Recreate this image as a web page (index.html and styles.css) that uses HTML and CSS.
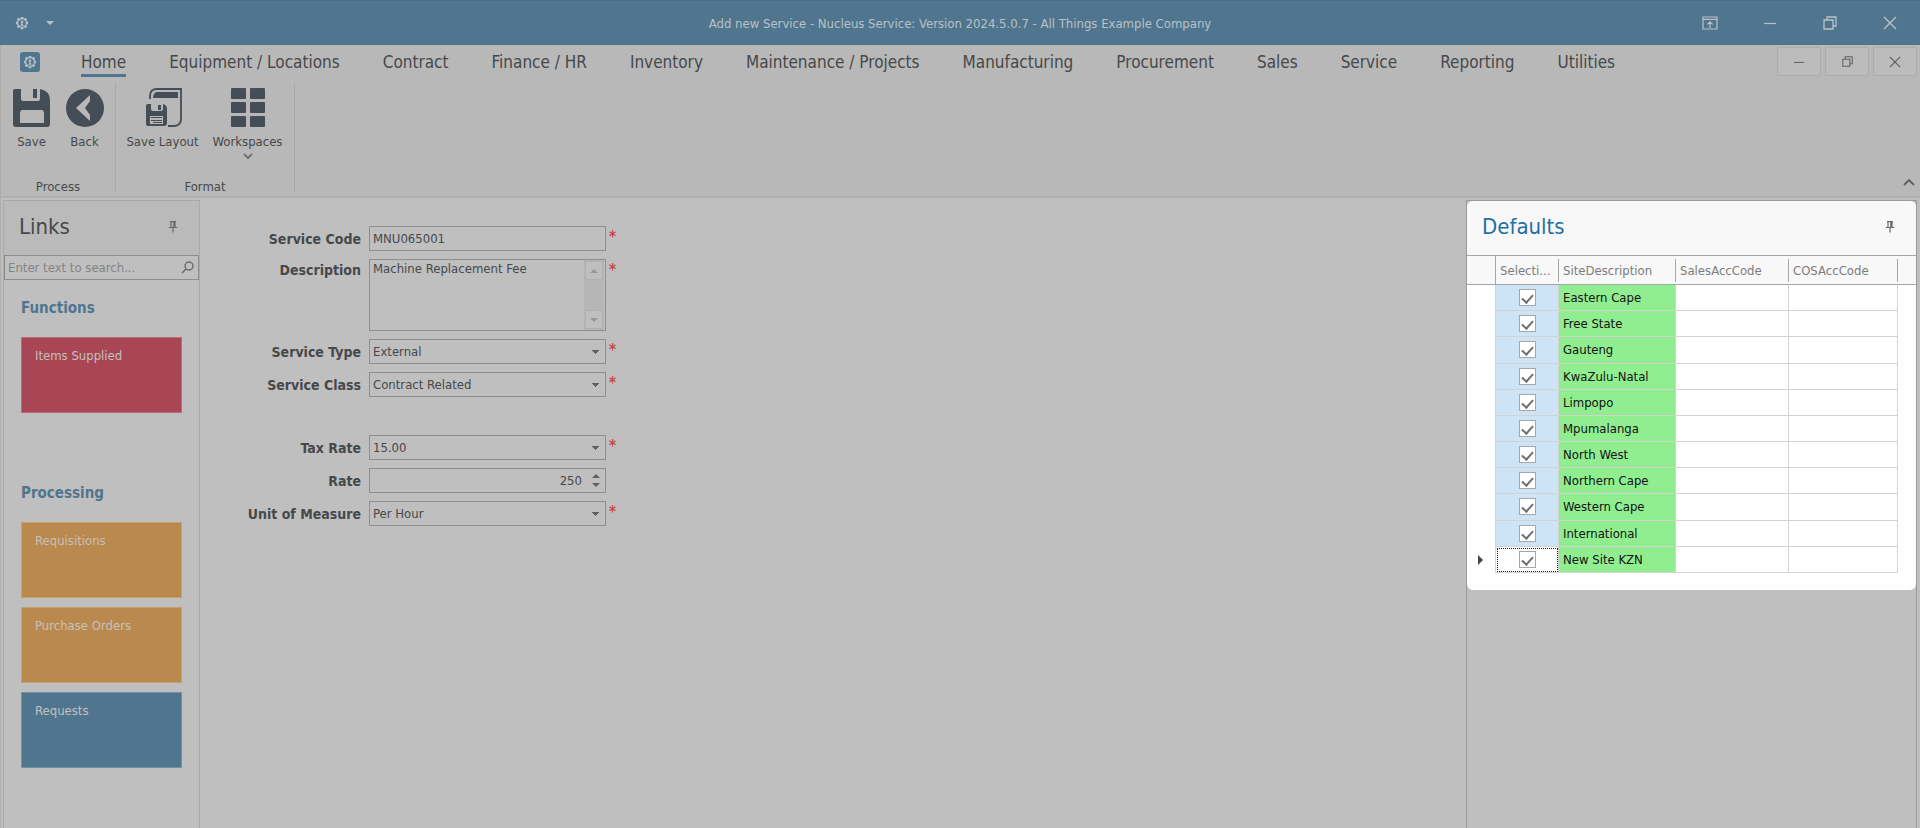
FILE: index.html
```html
<!DOCTYPE html>
<html lang="en">
<head>
    <meta charset="UTF-8">
    <meta name="viewport" content="width=device-width, initial-scale=1.0">
    <title>Add new Service - Nucleus Service</title>
    <link rel="stylesheet" href="styles.css">
</head>
<body>

    <!-- Shared icons -->
    <svg class="sprite" width="0" height="0" aria-hidden="true">
        <symbol id="gear" viewBox="0 0 16 16">
            <path d="M8 1v2M8 13v2M1 8h2M13 8h2M3 3l2 2M11 11l2 2M13 3l-2 2M5 11l-2 2" fill="none" stroke="currentColor" stroke-width="3"/>
            <circle cx="8" cy="8" r="5" fill="none" stroke="currentColor" stroke-width="1.4"/>
            <circle cx="8" cy="6.6" r="1.5" fill="currentColor"/>
            <path d="M6 11l2-4 2 4z" fill="currentColor"/>
        </symbol>
        <symbol id="pin" viewBox="0 0 10 12">
            <path d="M2 .7h6M3 1v5M7 1v5M5.8 1v5M.7 6.5h8.6M5 7v4.5" fill="none" stroke="currentColor" stroke-width="1.2"/>
        </symbol>
        <symbol id="close" viewBox="0 0 14 14">
            <path d="M1 1l12 12M13 1L1 13" fill="none" stroke="currentColor" stroke-width="1.4"/>
        </symbol>
        <symbol id="restore" viewBox="0 0 14 14">
            <path d="M1 4h9v9H1zM4 4V1h9v9h-3" fill="none" stroke="currentColor" stroke-width="1.3"/>
        </symbol>
        <symbol id="minimise" viewBox="0 0 14 14">
            <path d="M1 7.5h12" fill="none" stroke="currentColor" stroke-width="1.2"/>
        </symbol>
    </svg>

    <header class="title-bar">
        <div class="quick-access">
            <svg width="14" height="14"><use href="#gear"/></svg>
            <button class="quick-menu" aria-label="Customise"></button>
        </div>
        <h1 class="window-title">Add new Service - Nucleus Service: Version 2024.5.0.7 - All Things Example Company</h1>
        <div class="window-buttons">
            <button aria-label="Ribbon display">
                <svg width="16" height="14" viewBox="0 0 16 14" fill="none" stroke="currentColor" stroke-width="1.2"><path d="M1 1h14v12H1zM1 3.4h14M8 12V6M5.3 8.4 8 5.8l2.7 2.6"/></svg>
            </button>
            <button aria-label="Minimise"><svg width="14" height="14"><use href="#minimise"/></svg></button>
            <button aria-label="Restore"><svg width="14" height="14"><use href="#restore"/></svg></button>
            <button aria-label="Close"><svg width="14" height="14"><use href="#close"/></svg></button>
        </div>
    </header>

    <div class="ribbon">
        <div class="tab-row">
            <button class="app-button" aria-label="Application"><svg width="14" height="14"><use href="#gear"/></svg></button>
            <nav class="tabs">
                <a href="#" class="active">Home</a>
                <a href="#">Equipment / Locations</a>
                <a href="#">Contract</a>
                <a href="#">Finance / HR</a>
                <a href="#">Inventory</a>
                <a href="#">Maintenance / Projects</a>
                <a href="#">Manufacturing</a>
                <a href="#">Procurement</a>
                <a href="#">Sales</a>
                <a href="#">Service</a>
                <a href="#">Reporting</a>
                <a href="#">Utilities</a>
            </nav>
            <div class="child-buttons">
                <button aria-label="Minimise form"><svg width="12" height="12"><use href="#minimise"/></svg></button>
                <button aria-label="Restore form"><svg width="11" height="11"><use href="#restore"/></svg></button>
                <button aria-label="Close form"><svg width="12" height="12"><use href="#close"/></svg></button>
            </div>
        </div>

        <div class="groups">
            <section class="group">
                <div class="group-items">
                    <button class="tool">
                        <svg width="40" height="40" viewBox="0 0 40 40" fill="currentColor">
                            <path fill-rule="evenodd" d="M3 1h6v10q0 2 2 2h15q2 0 2-2V1q10 2 10 11v24q0 3-3 3H4q-3 0-3-3V3q0-2 2-2zM11 22q-3 0-3 3v10h24V25q0-3-3-3z"/>
                            <path d="M21 1h4v9h-4z"/>
                        </svg>
                        Save
                    </button>
                    <button class="tool">
                        <svg width="40" height="40" viewBox="0 0 40 40">
                            <circle cx="20" cy="20" r="19" fill="currentColor"/>
                            <path class="cutout" d="M25 7v6l-5 7 5 7v6L11 20z"/>
                        </svg>
                        Back
                    </button>
                </div>
                <h2>Process</h2>
            </section>
            <section class="group">
                <div class="group-items">
                    <button class="tool wide">
                        <svg width="40" height="40" viewBox="0 0 40 40" fill="currentColor">
                            <path d="M7 11V8q0-7 7-7h24v31q-1 6-7 6h-6" fill="none" stroke="currentColor" stroke-width="1.8"/>
                            <path d="M13 4h22v6H10q0-4 3-6z"/>
                            <path fill-rule="evenodd" d="M5 16h3v5q0 2 2 2h8q2 0 2-2v-5q4 1 4 5v14q0 3-3 3H5q-2 0-2-2V18q0-2 2-2zM7 28v8h13v-8z"/>
                            <path d="M15 17h3v5h-3zM8 29h11v1H8zM8 32h11v1H8zM10 34h9v1h-9z"/>
                        </svg>
                        Save Layout
                    </button>
                    <button class="tool wide">
                        <svg width="40" height="40" viewBox="0 0 40 40" fill="currentColor">
                            <rect x="3" y="0" width="15" height="11" rx="1"/><rect x="22" y="0" width="15" height="11" rx="1"/>
                            <rect x="3" y="14" width="15" height="11" rx="1"/><rect x="22" y="14" width="15" height="11" rx="1"/>
                            <rect x="3" y="28" width="15" height="11" rx="1"/><rect x="22" y="28" width="15" height="11" rx="1"/>
                        </svg>
                        Workspaces
                        <svg class="chevron" width="10" height="6" viewBox="0 0 10 6" fill="none" stroke="currentColor" stroke-width="1.6"><path d="M1 1l4 4 4-4"/></svg>
                    </button>
                </div>
                <h2>Format</h2>
            </section>
            <button class="collapse" aria-label="Collapse ribbon">
                <svg width="12" height="8" viewBox="0 0 12 8" fill="none" stroke="currentColor" stroke-width="1.8"><path d="M1 7l5-5 5 5"/></svg>
            </button>
        </div>
    </div>

    <div class="workspace">
        <aside class="links">
            <header class="panel-header">
                <h2>Links</h2>
                <button aria-label="Pin links"><svg width="10" height="12"><use href="#pin"/></svg></button>
            </header>
            <div class="search">
                <input type="search" placeholder="Enter text to search..." aria-label="Search links">
                <svg width="13" height="13" viewBox="0 0 13 13" fill="none" stroke="currentColor" stroke-width="1.4"><circle cx="8" cy="5" r="4"/><path d="M5 8L1 12"/></svg>
            </div>
            <section class="tiles">
                <h3>Functions</h3>
                <button class="tile red">Items Supplied</button>
            </section>
            <section class="tiles">
                <h3>Processing</h3>
                <button class="tile orange">Requisitions</button>
                <button class="tile orange">Purchase Orders</button>
                <button class="tile blue">Requests</button>
            </section>
        </aside>

        <main class="content">
            <form class="service-form">
                <div class="row">
                    <label for="code">Service Code</label>
                    <input class="field" id="code" type="text" value="MNU065001">
                    <span class="required">*</span>
                </div>
                <div class="row top">
                    <label for="description">Description</label>
                    <div class="field memo">
                        <textarea id="description">Machine Replacement Fee</textarea>
                        <div class="scrollbar">
                            <span class="scroll-button"><i class="arrow up"></i></span>
                            <span class="scroll-button"><i class="arrow"></i></span>
                        </div>
                    </div>
                    <span class="required">*</span>
                </div>
                <div class="row">
                    <label for="type">Service Type</label>
                    <select class="field" id="type"><option>External</option></select>
                    <span class="required">*</span>
                </div>
                <div class="row">
                    <label for="class">Service Class</label>
                    <select class="field" id="class"><option>Contract Related</option></select>
                    <span class="required">*</span>
                </div>
                <div class="row spaced">
                    <label for="tax">Tax Rate</label>
                    <select class="field" id="tax"><option>15.00</option></select>
                    <span class="required">*</span>
                </div>
                <div class="row">
                    <label for="rate">Rate</label>
                    <div class="field spin">
                        <input id="rate" type="number" value="250">
                        <div class="spin-buttons"><i class="arrow up"></i><i class="arrow"></i></div>
                    </div>
                </div>
                <div class="row">
                    <label for="unit">Unit of Measure</label>
                    <select class="field" id="unit"><option>Per Hour</option></select>
                    <span class="required">*</span>
                </div>
            </form>
        </main>

        <aside class="defaults">
            <div class="defaults-card">
                <header class="panel-header">
                    <h2>Defaults</h2>
                    <button aria-label="Pin defaults"><svg width="10" height="12"><use href="#pin"/></svg></button>
                </header>
                <table class="grid">
                    <colgroup>
                        <col class="col-marker"><col class="col-select"><col class="col-site"><col class="col-sales"><col class="col-cos"><col>
                    </colgroup>
                    <thead>
                        <tr><th></th><th><span>Selecti...</span></th><th><span>SiteDescription</span></th><th><span>SalesAccCode</span></th><th><span>COSAccCode</span></th><th></th></tr>
                    </thead>
                    <tbody>
                        <tr><td></td><td class="select"><input type="checkbox" aria-label="Eastern Cape" checked></td><td class="site">Eastern Cape</td><td></td><td></td><td></td></tr>
                        <tr><td></td><td class="select"><input type="checkbox" aria-label="Free State" checked></td><td class="site">Free State</td><td></td><td></td><td></td></tr>
                        <tr><td></td><td class="select"><input type="checkbox" aria-label="Gauteng" checked></td><td class="site">Gauteng</td><td></td><td></td><td></td></tr>
                        <tr><td></td><td class="select"><input type="checkbox" aria-label="KwaZulu-Natal" checked></td><td class="site">KwaZulu-Natal</td><td></td><td></td><td></td></tr>
                        <tr><td></td><td class="select"><input type="checkbox" aria-label="Limpopo" checked></td><td class="site">Limpopo</td><td></td><td></td><td></td></tr>
                        <tr><td></td><td class="select"><input type="checkbox" aria-label="Mpumalanga" checked></td><td class="site">Mpumalanga</td><td></td><td></td><td></td></tr>
                        <tr><td></td><td class="select"><input type="checkbox" aria-label="North West" checked></td><td class="site">North West</td><td></td><td></td><td></td></tr>
                        <tr><td></td><td class="select"><input type="checkbox" aria-label="Northern Cape" checked></td><td class="site">Northern Cape</td><td></td><td></td><td></td></tr>
                        <tr><td></td><td class="select"><input type="checkbox" aria-label="Western Cape" checked></td><td class="site">Western Cape</td><td></td><td></td><td></td></tr>
                        <tr><td></td><td class="select"><input type="checkbox" aria-label="International" checked></td><td class="site">International</td><td></td><td></td><td></td></tr>
                        <tr class="current"><td><i class="marker"></i></td><td class="select"><input type="checkbox" aria-label="New Site KZN" checked></td><td class="site">New Site KZN</td><td></td><td></td><td></td></tr>
                    </tbody>
                </table>
            </div>
        </aside>
    </div>

</body>
</html>
```
FILE: styles.css
```css
* {
    box-sizing: border-box;
}

body {
    margin: 0;
    min-height: 100vh;
    display: flex;
    flex-direction: column;
    background-color: #bfbfbf;
    color: #46484a;
    font-family: "DejaVu Sans Condensed", "Noto Sans", sans-serif;
    font-size: 13px;
}

h1, h2, h3 {
    margin: 0;
    font-weight: normal;
}

button, input, select, textarea {
    font: inherit;
    color: inherit;
}

button {
    border: none;
    padding: 0;
    background: none;
    cursor: pointer;
}

svg {
    display: block;
}

.sprite {
    position: absolute;
}

/* Title bar */
.title-bar {
    display: grid;
    grid-template-columns: 1fr auto 1fr;
    align-items: center;
    height: 45px;
    background-color: #50758f;
    border-top: 1px solid #4c6d84;
    color: #b9c1c7;
}

.quick-access {
    display: flex;
    align-items: center;
    gap: 17px;
    padding-left: 15px;
}

.quick-menu {
    border: 4px solid transparent;
    border-top-color: #b9c1c7;
    border-bottom: none;
}

.window-title {
    font-size: 13px;
}

.window-buttons {
    display: flex;
    justify-content: flex-end;
}

.window-buttons button {
    width: 60px;
    height: 44px;
    display: grid;
    place-items: center;
}

/* Ribbon */
.ribbon {
    background-color: #b8b8b8;
    border-bottom: 2px solid #b0b0b0;
    border-left: 1px solid #adadad;
}

.tab-row {
    display: flex;
    height: 38px;
    padding-right: 3px;
}

.app-button {
    width: 20px;
    height: 20px;
    margin: 7px 41px 0 19px;
    display: grid;
    place-items: center;
    border-radius: 3px;
    background-color: #50758f;
    color: #b9c1c7;
}

.tabs {
    flex: 1;
    display: flex;
    gap: 43px;
}

.tabs a {
    height: 32px;
    line-height: 35px;
    font-size: 17px;
    color: #46484a;
    text-decoration: none;
    white-space: nowrap;
}

.tabs .active {
    border-bottom: 3px solid #50758f;
}

.child-buttons {
    display: flex;
    gap: 4px;
    padding-top: 2px;
}

.child-buttons button {
    width: 44px;
    height: 29px;
    display: grid;
    place-items: center;
    border: 1px solid #adadad;
    border-radius: 2px;
    background-color: #bcbcbc;
    color: #606060;
}

.groups {
    display: flex;
    height: 113px;
    padding-bottom: 4px;
}

.group {
    display: flex;
    flex-direction: column;
    justify-content: space-between;
    padding: 5px 4px 0;
    border-right: 1px solid #a9a9a9;
}

.group-items {
    display: flex;
}

.group h2 {
    font-size: 13px;
    line-height: 11px;
    text-align: center;
}

.tool {
    width: 53px;
    display: flex;
    flex-direction: column;
    align-items: center;
    line-height: 27px;
}

.tool.wide {
    width: 85px;
}

.tool svg {
    color: #454d57;
}

.tool .chevron {
    margin-top: -2px;
    color: #606060;
}

.tool .cutout {
    fill: #b8b8b8;
}

.collapse {
    margin: auto 5px 6px auto;
    color: #606060;
}

/* Work area */
.workspace {
    flex: 1;
    display: flex;
    padding: 2px 3px 0 2px;
    border-left: 1px solid #adadad;
}

.panel-header {
    display: flex;
    align-items: center;
    justify-content: space-between;
    height: 54px;
    padding: 0 21px 3px 15px;
    background-color: #bababa;
}

.panel-header h2 {
    font-size: 22px;
}

.panel-header button {
    color: #6a6a6a;
}

.links {
    width: 197px;
    border: 1px solid #a9a9a9;
    border-bottom: none;
}

.search {
    display: flex;
    align-items: center;
    height: 25px;
    padding: 0 4px 0 3px;
    border: 1px solid #8e8e8e;
    color: #6a6a6a;
}

.search input {
    flex: 1;
    min-width: 0;
    padding: 0;
    border: none;
    outline: none;
    background: none;
    appearance: none;
}

.search input::placeholder {
    color: #848484;
    opacity: 1;
}

.tiles {
    display: flex;
    flex-direction: column;
    gap: 9px;
    padding: 18px 17px 52px;
}

.tiles h3 {
    margin-bottom: 10px;
    line-height: 20px;
    font-size: 15px;
    font-weight: bold;
    color: #50758f;
}

.tile {
    display: flex;
    height: 76px;
    padding: 10px 13px;
    border: 1px solid rgba(255, 255, 255, 0.2);
    color: #c6c0bd;
}

.red {
    background-color: #a84655;
}

.orange {
    background-color: #ba894e;
}

.blue {
    background-color: #50758f;
}

/* Service form */
.content {
    flex: 1;
}

.service-form {
    display: flex;
    flex-direction: column;
    gap: 8px;
    padding: 26px 0 0 20px;
}

.row {
    display: grid;
    grid-template-columns: 149px 237px auto;
    justify-content: start;
    align-items: center;
}

.row.top {
    align-items: start;
}

.row.spaced {
    margin-top: 30px;
}

.row label {
    padding-right: 8px;
    line-height: 22px;
    font-size: 14px;
    font-weight: bold;
    text-align: right;
}

.field {
    width: 100%;
    height: 25px;
    padding: 0 3px;
    border: 1px solid #8e8e8e;
    border-radius: 0;
    background-color: transparent;
    outline: none;
}

select.field {
    appearance: none;
    background-image: linear-gradient(to bottom right, #606060 50%, transparent 50%), linear-gradient(to bottom left, #606060 50%, transparent 50%);
    background-size: 4px 4px;
    background-repeat: no-repeat;
    background-position: right 5px center, right 9px center;
}

.memo {
    display: flex;
    height: 72px;
    padding-right: 1px;
}

.memo textarea {
    flex: 1;
    min-width: 0;
    padding: 1px 0;
    border: none;
    outline: none;
    resize: none;
    overflow: hidden;
    background: none;
}

.scrollbar {
    display: flex;
    flex-direction: column;
    justify-content: space-between;
    padding: 1px;
    background-color: #b6b6b6;
}

.scroll-button {
    display: grid;
    place-items: center;
    width: 18px;
    height: 19px;
    border: 1px solid #b0b0b0;
    background-color: #bfbfbf;
}

.arrow {
    border: 4px solid transparent;
    border-top-color: #606060;
    border-bottom: none;
}

.arrow.up {
    border-top: none;
    border-bottom: 4px solid #606060;
}

.scroll-button .arrow {
    opacity: 0.4;
}

.spin {
    display: flex;
    padding-right: 5px;
}

.spin input {
    flex: 1;
    min-width: 0;
    padding: 0 10px 0 0;
    border: none;
    outline: none;
    background: none;
    text-align: right;
    appearance: textfield;
}

.spin input::-webkit-inner-spin-button {
    appearance: none;
    margin: 0;
}

.spin-buttons {
    display: flex;
    flex-direction: column;
    justify-content: space-between;
    padding: 5px 0;
}

.required {
    align-self: start;
    padding-left: 3px;
    line-height: 22px;
    font-size: 15px;
    font-weight: bold;
    color: #c8484e;
}

/* Defaults panel */
.defaults {
    width: 451px;
    border: 1px solid #9a9a9a;
    border-bottom: none;
}

.defaults-card {
    padding-bottom: 17px;
    border-radius: 6px;
    background-color: #fff;
    overflow: hidden;
}

.defaults .panel-header {
    background-color: #f8f8f8;
}

.defaults h2 {
    color: #1f70a3;
}

.grid {
    width: 100%;
    height: 318px;
    table-layout: fixed;
    border-collapse: separate;
    border-spacing: 0;
    color: #111;
}

.col-marker {
    width: 29px;
}

.col-select {
    width: 63px;
}

.col-site {
    width: 117px;
}

.col-sales {
    width: 113px;
}

.col-cos {
    width: 109px;
}

.grid th {
    height: 30px;
    padding: 2px 0;
    border-top: 1px solid #a6a6a6;
    border-bottom: 1px solid #a6a6a6;
    background-color: #f8f8f8;
    color: #7c7c7c;
    font-weight: normal;
    text-align: left;
}

.grid th:first-child {
    border-right: 1px solid #a6a6a6;
}

.grid th span {
    display: block;
    padding-left: 4px;
    line-height: 23px;
    border-right: 1px solid #a6a6a6;
}

.grid td {
    padding: 0 4px;
    border-right: 1px solid #d3d3d3;
    border-bottom: 1px solid #d3d3d3;
}

.grid td:first-child {
    padding-left: 11px;
    border-bottom: none;
}

.grid td:last-child {
    border: none;
}

.grid .select {
    background-color: #cde4f6;
    text-align: center;
}

.grid .site {
    background-color: #90ee90;
}

.grid .current .select {
    background-color: #fff;
    outline: 1px dotted #222;
    outline-offset: -2px;
}

.grid input {
    display: block;
    width: 17px;
    height: 17px;
    margin: auto;
    appearance: none;
    border: 1px solid #a6a6a6;
    background-color: #fff;
}

.grid input:checked::after {
    content: "";
    display: block;
    width: 5px;
    height: 9px;
    margin: 2px auto;
    border: solid #707070;
    border-width: 0 2px 2px 0;
    transform: rotate(42deg);
}

.marker {
    display: block;
    width: 0;
    border: 5px solid transparent;
    border-left-color: #444;
    border-right: none;
}
```
